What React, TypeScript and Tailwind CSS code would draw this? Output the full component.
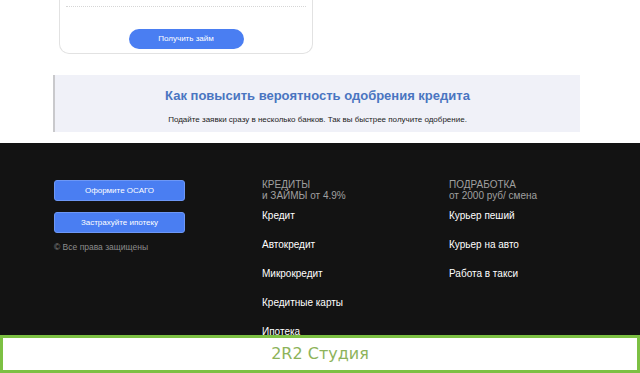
const creditLinks = ['Кредит', 'Автокредит', 'Микрокредит', 'Кредитные карты', 'Ипотека'];
const jobLinks = ['Курьер пеший', 'Курьер на авто', 'Работа в такси'];

export default function App() {
  return (
    <div className="min-h-[373px] bg-white font-[family-name:Liberation_Sans,Arial,sans-serif] overflow-hidden">
      {/* ── Loan card (scrolled, top cut off) ───────────────────────────── */}
      <div className="ml-[59px] w-[254px] h-[54px] border-x border-b border-[#e2e2e2] rounded-b-[10px] flex flex-col items-center">
        <div className="mt-[6px] w-[240px] border-t border-dotted border-[#d6d6d6]" />
        <button className="mt-[22px] w-[115px] h-[20px] rounded-full bg-[#4a7ef2] text-white text-[8px] leading-none">
          Получить займ
        </button>
      </div>

      {/* ── Tip box ─────────────────────────────────────────────────────── */}
      <section className="ml-[53px] mt-[21px] w-[527px] h-[57px] bg-[#f0f1f8] border-l-2 border-[#c9c9cc] flex flex-col items-center">
        <h2 className="mt-[13px] text-[13px] leading-[16px] font-bold text-[#4a75c1]">
          Как повысить вероятность одобрения кредита
        </h2>
        <p className="mt-[11px] text-[8px] leading-[9px] text-[#1c1c1c]">
          Подайте заявки сразу в несколько банков. Так вы быстрее получите одобрение.
        </p>
      </section>

      {/* ── Footer ──────────────────────────────────────────────────────── */}
      <footer className="mt-[11px] bg-[#131313] h-[240px] flex pt-[36px]">
        <div className="ml-[54px] w-[131px] flex flex-col">
          <button className="mt-[1px] h-[21px] rounded-[3px] bg-[#4a7ef2] border border-[#6d97f5] text-white text-[8px] leading-none">
            Оформите ОСАГО
          </button>
          <button className="mt-[11px] h-[21px] rounded-[3px] bg-[#4a7ef2] border border-[#6d97f5] text-white text-[8px] leading-none">
            Застрахуйте ипотеку
          </button>
          <span className="mt-[9px] text-[8.5px] leading-[10px] text-[#8c8c8c]">© Все права защищены</span>
        </div>

        <div className="ml-[77px] w-[187px] flex flex-col">
          <span className="text-[10px] leading-[11px] text-[#a0a0a0]">КРЕДИТЫ</span>
          <span className="text-[10px] leading-[12px] text-[#a0a0a0]">и ЗАЙМЫ от 4.9%</span>
          <div className="mt-[7px] flex flex-col gap-[16px]">
            {creditLinks.map((l) => (
              <span key={l} className="text-[10px] leading-[13px] text-white">{l}</span>
            ))}
          </div>
        </div>

        <div className="flex flex-col">
          <span className="text-[10px] leading-[11px] text-[#a0a0a0]">ПОДРАБОТКА</span>
          <span className="text-[10px] leading-[12px] text-[#a0a0a0]">от 2000 руб/ смена</span>
          <div className="mt-[7px] flex flex-col gap-[16px]">
            {jobLinks.map((l) => (
              <span key={l} className="text-[10px] leading-[13px] text-white">{l}</span>
            ))}
          </div>
        </div>
      </footer>

      {/* ── Studio overlay bar ──────────────────────────────────────────── */}
      <div className="fixed left-0 right-0 bottom-0 h-[38px] bg-white border-[3px] border-[#7cc043] flex items-center justify-center">
        <span className="font-[family-name:DejaVu_Sans,sans-serif] text-[16px] text-[#8db35a]">2R2 Студия</span>
      </div>
    </div>
  );
}
